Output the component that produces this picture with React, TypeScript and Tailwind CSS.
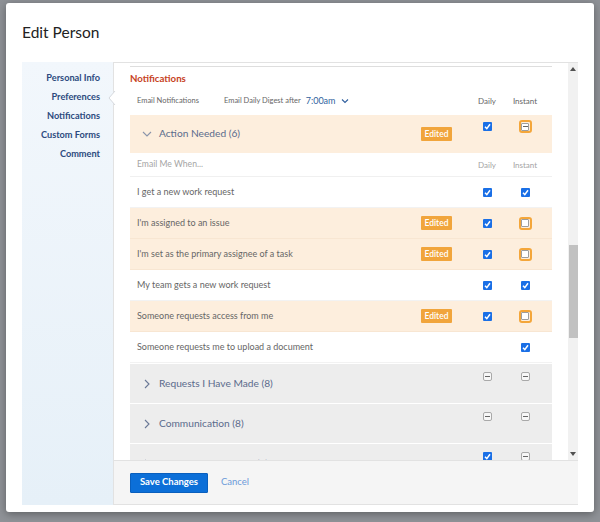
import React from "react";

type Box = "on" | "ringEmpty" | "ringMinus" | "minus" | "none";

interface Row {
	label: string;
	edited?: boolean;
	daily: Box;
	instant: Box;
}

const rows: Row[] = [
	{ label: "I get a new work request", daily: "on", instant: "on" },
	{ label: "I'm assigned to an issue", edited: true, daily: "on", instant: "ringEmpty" },
	{ label: "I'm set as the primary assignee of a task", edited: true, daily: "on", instant: "ringEmpty" },
	{ label: "My team gets a new work request", daily: "on", instant: "on" },
	{ label: "Someone requests access from me", edited: true, daily: "on", instant: "ringEmpty" },
	{ label: "Someone requests me to upload a document", daily: "none", instant: "on" },
];

const groups = [
	{ label: "Requests I Have Made (8)", daily: "minus" as Box, instant: "minus" as Box },
	{ label: "Communication (8)", daily: "minus" as Box, instant: "minus" as Box },
	{ label: "Approval Information (5)", daily: "on" as Box, instant: "minus" as Box },
];

const navItems = ["Personal Info", "Preferences", "Notifications", "Custom Forms", "Comment"];

const CheckBox: React.FC<{ kind: Box }> = ({ kind }) => {
	if (kind === "none") return null;
	if (kind === "on") {
		return (
			<div className="w-[9px] h-[9px] rounded-[1px] bg-[#1a6fe6] flex items-center justify-center">
				<svg width="7" height="7" viewBox="0 0 7 7">
					<path d="M1 3.8 L2.8 5.6 L6 1.2" stroke="#fff" strokeWidth="1.5" fill="none" />
				</svg>
			</div>
		);
	}
	if (kind === "minus") {
		return (
			<div className="w-[9px] h-[9px] rounded-[2px] border border-[#a9a9a9] bg-[#f7f7f7] flex items-center justify-center">
				<div className="w-[5px] h-[1.5px] bg-[#666]" />
			</div>
		);
	}
	return (
		<div className="w-[13px] h-[13px] rounded-[3px] border-2 border-[#f4a63a] flex items-center justify-center">
			<div className="w-[8px] h-[8px] rounded-[1px] border border-[#9d9d9d] bg-white flex items-center justify-center">
				{kind === "ringMinus" && <div className="w-[5px] h-[1.5px] bg-[#666]" />}
			</div>
		</div>
	);
};

const Edited: React.FC = () => (
	<span className="w-[31px] h-[14px] bg-[#f1a53c] text-white text-[8.5px] font-semibold flex items-center justify-center rounded-[1px]">
		Edited
	</span>
);

const Chevron: React.FC<{ down?: boolean }> = ({ down }) => (
	<svg width="10" height="10" viewBox="0 0 10 10" className="shrink-0">
		{down ? (
			<path d="M1 3 L5 7 L9 3" stroke="#8a94aa" strokeWidth="1.1" fill="none" />
		) : (
			<path d="M3 1 L7 5 L3 9" stroke="#6a7896" strokeWidth="1.1" fill="none" />
		)}
	</svg>
);

export default function App() {
	return (
		<div
			className="w-[600px] h-[522px] bg-[#8f9297] overflow-hidden pt-[3px] px-[6px]"
			style={{ fontFamily: "Lato, 'Open Sans', sans-serif" }}
		>
			<div className="h-[509px] bg-white rounded-[3px] shadow-[0_2px_8px_rgba(0,0,0,0.35)] flex flex-col">
				<div className="h-[59px] px-[16px] flex items-center text-[15.5px] text-[#222] pt-[1px]">Edit Person</div>

				<div className="flex mx-[16px] h-[443px]">
					{/* sidebar */}
					<div className="w-[91px] bg-gradient-to-b from-[#f2f7fc] to-[#e6f0f8] flex flex-col items-end pr-[13px] pt-[9px] gap-[6px]">
						{navItems.map((n) => (
							<div key={n} className="text-[9.2px] font-bold text-[#2c4a7e] h-[13px] leading-[13px]">
								{n}
							</div>
						))}
					</div>

					{/* main */}
					<div className="flex-1 flex flex-col border-l border-t border-[#e2e2e2] relative">
						<svg width="8" height="14" viewBox="0 0 8 14" className="absolute left-[-6px] top-[28px]">
							<path d="M7 0 L1 7 L7 14" fill="#fff" stroke="#d5d9de" strokeWidth="1" />
						</svg>
						<div className="flex h-[397px]">
							<div className="flex-1 overflow-hidden px-[16px]">
								<div className="h-[4px] border-b border-[#dedede]" />
								<div className="text-[9.7px] font-bold text-[#c7421e] pt-[5px] h-[24px] leading-[12px]">Notifications</div>
								<div className="flex items-center h-[19px] text-[7.5px] text-[#666] pl-[7px]">
									<span className="w-[87px]">Email Notifications</span>
									<span>Email Daily Digest after</span>
									<span className="text-[9px] text-[#2f5f9e] ml-[5px]">7:00am</span>
									<svg width="8" height="8" viewBox="0 0 8 8" className="ml-[6px]">
										<path d="M1 2.5 L4 5.5 L7 2.5" stroke="#2f5f9e" strokeWidth="1.1" fill="none" />
									</svg>
									<span className="flex-1" />
									<span className="w-[38px] text-center text-[8px]">Daily</span>
									<span className="w-[38px] text-center text-[8px]">Instant</span>
									<span className="w-[8px]" />
								</div>
								<div className="h-[5px]" />

								{/* Action Needed header */}
								<div className="h-[38px] bg-[#fdeedd] flex items-center pl-[12px]">
									<Chevron down />
									<span className="ml-[7px] text-[10.2px] text-[#5b6b8c]">Action Needed (6)</span>
									<span className="flex-1" />
									<Edited />
									<span className="w-[16px]" />
									<div className="w-[38px] flex justify-center self-start pt-[7px]">
										<CheckBox kind="on" />
									</div>
									<div className="w-[38px] flex justify-center self-start pt-[5px]">
										<CheckBox kind="ringMinus" />
									</div>
									<span className="w-[8px]" />
								</div>

								<div className="h-[24px] flex items-center pl-[7px] text-[8.6px] text-[#a4a4a4] border-b border-[#f0f0f0]">
									<span className="flex-1">Email Me When...</span>
									<span className="w-[38px] text-center text-[8px]">Daily</span>
									<span className="w-[38px] text-center text-[8px]">Instant</span>
									<span className="w-[8px]" />
								</div>

								{rows.map((r) => (
									<div
										key={r.label}
										className={`h-[31px] flex items-center pl-[7px] text-[9px] text-[#666] border-b ${
											r.edited ? "bg-[#fdeedd] border-[#f8e6d2]" : "bg-white border-[#f2f2f2]"
										}`}
									>
										<span className="flex-1">{r.label}</span>
										{r.edited && <Edited />}
										<span className="w-[16px]" />
										<div className="w-[38px] flex justify-center">
											<CheckBox kind={r.daily} />
										</div>
										<div className="w-[38px] flex justify-center">
											<CheckBox kind={r.instant} />
										</div>
										<span className="w-[8px]" />
									</div>
								))}

								{groups.map((g) => (
									<div key={g.label} className="h-[40px] bg-[#ededed] border-t border-white flex pl-[12px]">
										<div className="flex items-center self-stretch">
											<Chevron />
											<span className="ml-[7px] text-[10.2px] text-[#5b6b8c]">{g.label}</span>
										</div>
										<span className="flex-1" />
										<div className="w-[38px] flex justify-center pt-[8px]">
											<CheckBox kind={g.daily} />
										</div>
										<div className="w-[38px] flex justify-center pt-[8px]">
											<CheckBox kind={g.instant} />
										</div>
										<span className="w-[8px]" />
									</div>
								))}
							</div>

							{/* scrollbar */}
							<div className="w-[10px] bg-[#f1f1f1] flex flex-col items-center">
								<svg width="6" height="4" viewBox="0 0 6 4" className="mt-[4px]">
									<path d="M0 4 L3 0 L6 4 Z" fill="#505050" />
								</svg>
								<div className="h-[174px]" />
								<div className="w-[9px] h-[93px] bg-[#c1c1c1]" />
								<div className="flex-1" />
								<svg width="6" height="4" viewBox="0 0 6 4" className="mb-[4px]">
									<path d="M0 0 L3 4 L6 0 Z" fill="#505050" />
								</svg>
							</div>
						</div>

						{/* footer */}
						<div className="flex-1 bg-[#f5f5f5] border-t border-[#e2e2e2] border-b flex items-center pl-[16px] gap-[13px]">
							<button className="h-[20px] w-[78px] bg-[#0c6fd8] border border-[#0a5fbd] text-white text-[9.5px] font-bold rounded-[1px]">
								Save Changes
							</button>
							<span className="text-[9.5px] text-[#6c9ad9]">Cancel</span>
						</div>
					</div>
				</div>
			</div>
		</div>
	);
}
